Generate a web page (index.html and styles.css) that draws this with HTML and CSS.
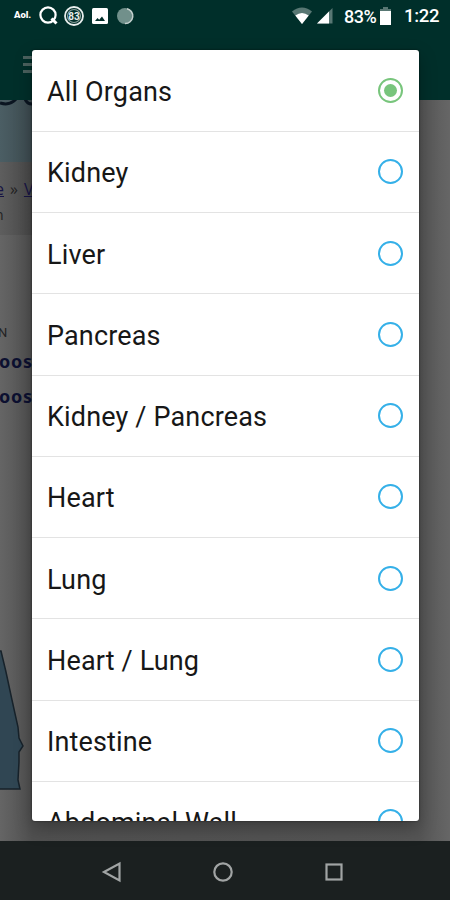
FILE: index.html
```html
<!DOCTYPE html>
<html lang="en">
<head>
<meta charset="utf-8">
<title>Select organ</title>
<link rel="stylesheet" href="styles.css">
</head>
<body>
<div class="screen">
  <header class="appbar">
    <div class="status">
      <div class="status-left">
        <span class="aol">Aol.</span>
        <svg class="search" width="20" height="20" viewBox="0 0 20 20" fill="none" stroke="#fff"><circle cx="9" cy="9" r="7.6" stroke-width="2.2"/><path d="M12.500 12.500l5 5" stroke-width="3"/></svg>
        <svg class="gauge" width="20" height="20" viewBox="0 0 20 20"><circle cx="10" cy="10" r="9" fill="none" stroke="#e8eeed" stroke-width="1.8"/><circle cx="10" cy="10" r="6.5" fill="none" stroke="#8ba09d" stroke-width="1.2"/><text x="10" y="13.6" text-anchor="middle">83</text></svg>
        <svg class="photo" width="16" height="16" viewBox="0 0 16 16"><rect width="16" height="16" rx="1.5" fill="#fff"/><path d="M3 13l2.500-3 1.700 1.800 2.800-3.300 3 4.500z" fill="#002d29"/></svg>
        <svg class="dot" width="18" height="18" viewBox="0 0 18 18"><circle cx="9" cy="9" r="8" fill="#71908b"/><path d="M11 1.700a7.500 7.500 0 0 1-2 14.800" fill="none" stroke="#c4d0ce" stroke-width="1.500"/></svg>
      </div>
      <div class="status-right">
        <svg class="wifi" width="22" height="18" viewBox="0 0 22 18"><path d="M1 4.500Q11-3.500 21 4.500L11 17z" fill="#587773"/><path d="M4.300 8.500Q11 3.500 17.700 8.500L11 17z" fill="#fff"/></svg>
        <svg class="signal" width="16" height="16" viewBox="0 0 16 16"><path d="M0 15.500L15.500 0v15.500z" fill="#587773"/><path d="M0 15.500L12 3.500v12z" fill="#fff"/></svg>
        <span class="percent">83%</span>
        <svg class="battery" width="11" height="18" viewBox="0 0 11 18"><path d="M3 0h5v2h3v3H0V2h3z" fill="#587773"/><path d="M0 4h11v14H0z" fill="#fff"/></svg>
        <span class="clock">1:22</span>
      </div>
    </div>
    <div class="menu"><i></i><i></i><i></i></div>
  </header>
  <main class="page">
    <div class="banner"><svg width="32" height="10" viewBox="0 0 32 10" fill="none" stroke="#0b1521" stroke-width="3"><path d="M0 3Q10 6 16-1M25-1Q27 4 32 4"/></svg></div>
    <div class="crumbs"><div><a>e</a><span>»</span><a>V</a></div><p>n</p></div>
    <div class="links"><p>N</p><b>oos</b><b>oos</b></div>
    <svg class="map" width="25" height="142" viewBox="0 0 25 142"><path d="M-2 1H1L6 22L12 50L18 77L19 88L23 96L19 102L19 112L18 130L20 139H-2z" fill="#304653" stroke="#17222a" stroke-width="1.500"/></svg>
  </main>
  <nav class="navbar">
    <svg width="22" height="22" viewBox="0 0 22 22"><path d="M3 11L18.500 2.500v17z"/></svg>
    <svg width="22" height="22" viewBox="0 0 22 22"><circle cx="11" cy="11" r="8.700"/></svg>
    <svg width="22" height="22" viewBox="0 0 22 22"><rect x="3.500" y="3.500" width="15" height="15"/></svg>
  </nav>
  <div class="dialog">
    <div class="option"><span>All Organs</span><i class="radio checked"></i></div>
    <div class="option"><span>Kidney</span><i class="radio"></i></div>
    <div class="option"><span>Liver</span><i class="radio"></i></div>
    <div class="option"><span>Pancreas</span><i class="radio"></i></div>
    <div class="option"><span>Kidney / Pancreas</span><i class="radio"></i></div>
    <div class="option"><span>Heart</span><i class="radio"></i></div>
    <div class="option"><span>Lung</span><i class="radio"></i></div>
    <div class="option"><span>Heart / Lung</span><i class="radio"></i></div>
    <div class="option"><span>Intestine</span><i class="radio"></i></div>
    <div class="option"><span>Abdominal Wall</span><i class="radio"></i></div>
  </div>
</div>
</body>
</html>
```

FILE: styles.css
```css
* { box-sizing: border-box; }
body { margin: 0; font-family: Roboto, "Liberation Sans", sans-serif; }
p { margin: 0; }
svg { display: block; flex: none; }
.screen { position: relative; width: 450px; height: 900px; overflow: hidden; display: flex; flex-direction: column; background: #656565; }
.appbar { height: 100px; background: #002f2a; flex: none; }
.status { height: 32px; display: flex; justify-content: space-between; color: #fff; padding: 0 11px 0 14px; }
.status-left, .status-right { display: flex; align-items: center; }
.aol { width: 25px; font-size: 9.5px; font-weight: 900; line-height: 30px; height: 32px; }
.gauge { margin-left: 5px; }
.gauge text { font-size: 10px; font-weight: 700; fill: #e8eeed; }
.photo { margin-left: 8px; }
.dot { margin-left: 8px; }
.signal { margin-left: 4px; }
.percent { width: 34px; margin-left: 11px; font-size: 18px; font-weight: 500; letter-spacing: -0.5px; }
.battery { margin-left: 2px; }
.clock { width: 35px; margin-left: 13px; font-size: 18.5px; font-weight: 500; letter-spacing: -0.3px; white-space: nowrap; }
.menu { width: 20px; margin: 24px 0 0 23px; display: grid; gap: 4px; }
.menu i { height: 3px; background: #4b625f; }
.page { height: 741px; flex: none; background: linear-gradient(90deg, #656565 0, #505050 32px, #555 419px, #666 450px); }
.banner { height: 62px; width: 32px; background: linear-gradient(90deg, #4b5e64, #3d4b50); }
.crumbs { height: 73px; width: 32px; padding-top: 16px; overflow: hidden; background: linear-gradient(90deg, #5e5e5e, #484848); font: 16px/22px "Open Sans", sans-serif; color: #222; }
.crumbs div { display: flex; gap: 6px; margin-left: -5px; }
.crumbs a { color: #171444; text-decoration: underline; }
.crumbs p { font-size: 14px; margin: 4px 0 0 -5px; }
.links { width: 32px; height: 415px; padding-top: 88px; overflow: hidden; }
.links p { font-size: 13px; line-height: 20px; margin-left: -2px; color: #222; }
.links b { display: block; font: 700 18px/35px "Noto Sans", sans-serif; letter-spacing: 0.8px; margin-left: -1px; color: #0c1030; position: relative; top: 1px; }
.navbar { height: 59px; flex: none; background: #1b2020; display: flex; justify-content: center; align-items: center; gap: 89px; padding: 3px 5px 0 0; }
.navbar svg { fill: none; stroke: #a1a4a4; stroke-width: 2.2; }
.dialog { position: absolute; left: 32px; top: 50px; width: 387px; height: 770.5px; padding-top: 0.5px; overflow: hidden; background: #fff; border-radius: 3px; box-shadow: 0 0 2px rgba(0,0,0,.6), 0 7px 18px rgba(0,0,0,.3); }
.option { height: 81.25px; padding: 0 16px 0 15px; display: flex; align-items: center; justify-content: space-between; border-bottom: 1.5px solid #e3e3e3; color: #171717; font-size: 27px; line-height: 32px; letter-spacing: 0.15px; }
.option span { position: relative; top: 1.6px; white-space: nowrap; }
.radio { width: 25px; height: 25px; flex: none; border: 2px solid #35b0e8; border-radius: 50%; display: grid; place-items: center; }
.checked { border-color: #78c57c; }
.checked::after { content: ""; width: 13px; height: 13px; border-radius: 50%; background: #78c57c; }
```
